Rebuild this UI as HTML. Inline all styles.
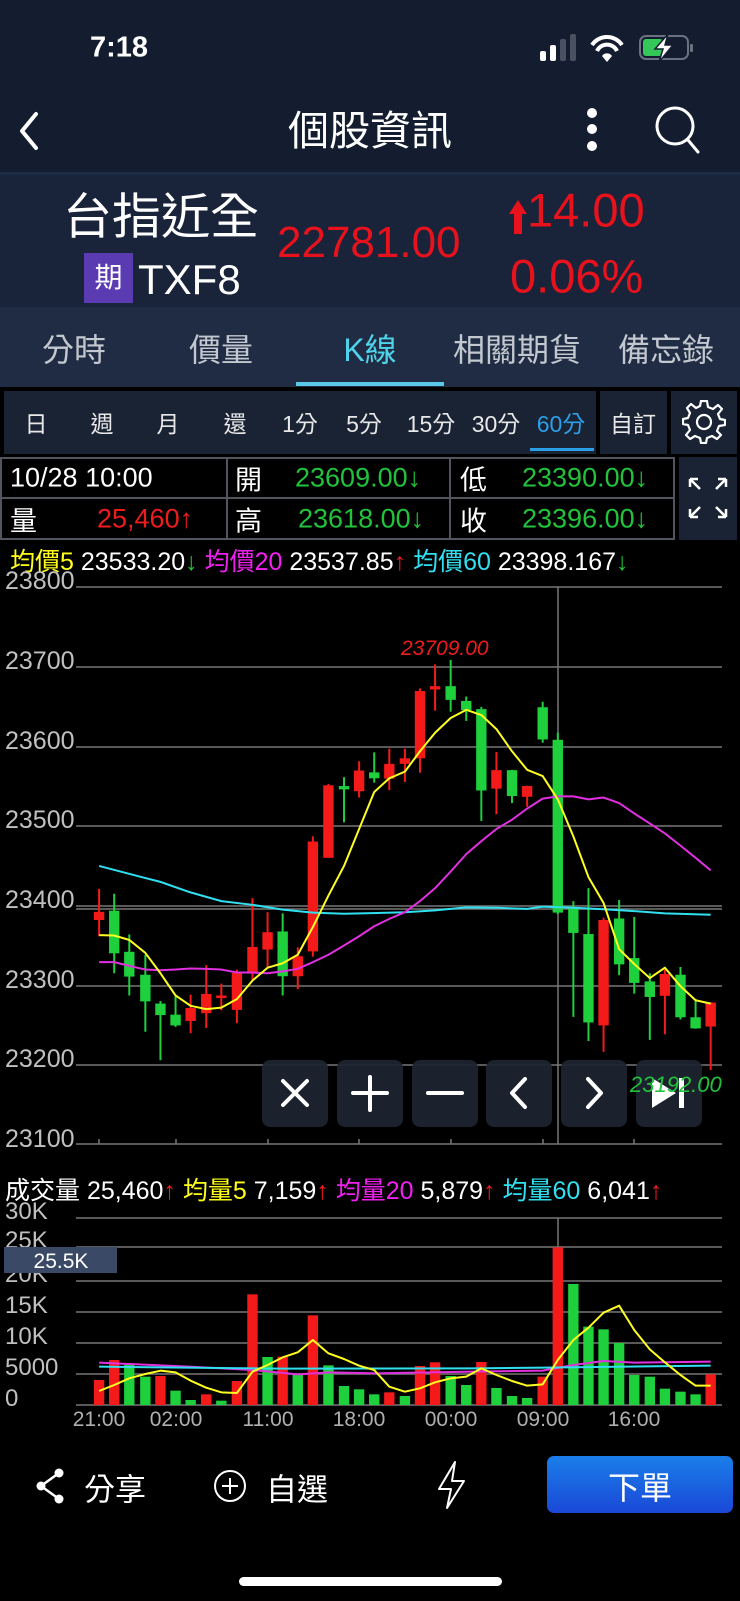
<!DOCTYPE html>
<html><head><meta charset="utf-8">
<style>
*{margin:0;padding:0;box-sizing:border-box}
body{width:740px;height:1601px;background:#000;position:relative;overflow:hidden;font-family:"Liberation Sans","Noto Sans CJK TC",sans-serif;color:#fff}
.a{position:absolute;white-space:nowrap}
.cc{transform:translate(-50%,-50%)}
.vc{transform:translateY(-50%)}
</style></head><body>
<div class="a" style="left:0;top:0;width:740px;height:173px;background:#141d2f"></div>
<div class="a" style="left:0;top:172px;width:740px;height:3px;background:#1d2c45"></div>
<div class="a" style="left:0;top:175px;width:740px;height:132px;background:#19233a"></div>
<div class="a" style="left:0;top:307px;width:740px;height:80px;background:#1f2c43"></div>

<div class="a vc" style="left:90px;top:48px;font-size:29px;font-weight:bold">7:18</div>
<svg class="a" style="left:535px;top:34px" width="160" height="30">
<rect x="5" y="17" width="6" height="10" rx="2" fill="#fff"/>
<rect x="15" y="11" width="6" height="16" rx="2" fill="#fff"/>
<rect x="25" y="5" width="6" height="22" rx="2" fill="#4a5262"/>
<rect x="35" y="0" width="6" height="27" rx="2" fill="#4a5262"/>
<path d="M57 11 A18 18 0 0 1 87 11" stroke="#fff" stroke-width="4" fill="none"/>
<path d="M62 17 A11 11 0 0 1 82 17" stroke="#fff" stroke-width="4" fill="none"/>
<path d="M67 22 L72 28 L77 22 A6 6 0 0 0 67 22Z" fill="#fff"/>
<rect x="105" y="2" width="48" height="23" rx="6" stroke="#6a7180" stroke-width="2" fill="none"/>
<rect x="108" y="5" width="20" height="17" rx="3" fill="#34c759"/>
<rect x="155" y="10" width="3" height="8" rx="1" fill="#6a7180"/>
<path d="M133 0 L120 15 L128 15 L124 28 L138 11 L130 11 Z" fill="#fff" stroke="#141d2f" stroke-width="1.5"/>
</svg>

<svg class="a" style="left:14px;top:110px" width="30" height="42"><path d="M22 4 L8 21 L22 38" stroke="#fff" stroke-width="4" fill="none" stroke-linecap="round" stroke-linejoin="round"/></svg>
<div class="a cc" style="left:370px;top:127px;font-size:41px">個股資訊</div>
<svg class="a" style="left:580px;top:104px" width="120" height="52">
<circle cx="12" cy="9" r="5" fill="#fff"/><circle cx="12" cy="25" r="5" fill="#fff"/><circle cx="12" cy="42" r="5" fill="#fff"/>
<circle cx="95" cy="22" r="18" stroke="#fff" stroke-width="3" fill="none"/>
<path d="M108 36 L118 48" stroke="#fff" stroke-width="3" stroke-linecap="round"/>
</svg>

<div class="a vc" style="left:63px;top:213px;font-size:49px">台指近全</div>
<div class="a" style="left:84px;top:253px;width:49px;height:50px;background:#5b3bb2;font-size:28px;text-align:center;line-height:50px">期</div>
<div class="a vc" style="left:138px;top:280px;font-size:42px">TXF8</div>
<div class="a vc" style="left:277px;top:243px;font-size:44px;color:#e8121c">22781.00</div>
<svg class="a" style="left:508px;top:200px" width="20" height="34"><path d="M10 0 L19 14 L14 14 L14 34 L6 34 L6 14 L1 14 Z" fill="#e8121c"/></svg>
<div class="a vc" style="left:527px;top:210px;font-size:47px;color:#e8121c">14.00</div>
<div class="a vc" style="left:510px;top:276px;font-size:47px;color:#e8121c">0.06%</div>

<div class="a cc" style="left:74px;top:348px;font-size:32px;color:#c3c7cf">分時</div>
<div class="a cc" style="left:221px;top:348px;font-size:32px;color:#c3c7cf">價量</div>
<div class="a cc" style="left:370px;top:348px;font-size:32px;color:#4fd3ea">K線</div>
<div class="a cc" style="left:517px;top:348px;font-size:32px;color:#c3c7cf">相關期貨</div>
<div class="a cc" style="left:666px;top:348px;font-size:32px;color:#c3c7cf">備忘錄</div>
<div class="a" style="left:296px;top:382px;width:148px;height:4px;background:#5bc8e8"></div>

<div class="a" style="left:4px;top:391px;width:592px;height:63px;background:#1a2333"></div>
<div class="a" style="left:600px;top:391px;width:67px;height:63px;background:#1a2333"></div>
<div class="a" style="left:671px;top:391px;width:66px;height:63px;background:#1a2333"></div>
<div style="font-size:23px;color:#e8e8e8">
<div class="a cc" style="left:36px;top:422px">日</div>
<div class="a cc" style="left:102px;top:422px">週</div>
<div class="a cc" style="left:168px;top:422px">月</div>
<div class="a cc" style="left:235px;top:422px">還</div>
<div class="a cc" style="left:300px;top:422px">1分</div>
<div class="a cc" style="left:364px;top:422px">5分</div>
<div class="a cc" style="left:431px;top:422px">15分</div>
<div class="a cc" style="left:496px;top:422px">30分</div>
<div class="a cc" style="left:561px;top:422px;color:#2d9ee8">60分</div>
<div class="a cc" style="left:633px;top:422px">自訂</div>
</div>
<div class="a" style="left:530px;top:448px;width:64px;height:3px;background:#2d9ee8"></div>
<svg class="a" style="left:682px;top:400px" width="44" height="44" viewBox="-22 -22 44 44">
<path d="M-3 -19 L3 -19 L4 -13 L9 -11 L14 -15 L18 -11 L14 -6 L16 -1 L21 0 L21 5 L15 6 L13 11 L17 15 L13 19 L8 16 L3 18 L2 23 L-3 23 L-4 18 L-9 16 L-14 19 L-18 15 L-14 10 L-16 5 L-21 4 L-21 -1 L-16 -2 L-14 -7 L-17 -12 L-13 -16 L-8 -12 L-4 -14 Z" transform="translate(0,-2)" stroke="#fff" stroke-width="2.2" fill="none" stroke-linejoin="round"/>
<circle cx="0" cy="0" r="7" stroke="#fff" stroke-width="2.2" fill="none"/>
</svg>

<div class="a" style="left:0;top:457px;width:675px;height:83px;border:2px solid #505560;background:#000"></div>
<div class="a" style="left:0;top:497px;width:675px;height:2px;background:#505560"></div>
<div class="a" style="left:226px;top:457px;width:2px;height:83px;background:#505560"></div>
<div class="a" style="left:449px;top:457px;width:2px;height:83px;background:#505560"></div>
<div style="font-size:27px">
<div class="a vc" style="left:10px;top:478px">10/28 10:00</div>
<div class="a vc" style="left:10px;top:519px">量</div>
<div class="a vc" style="left:97px;top:519px;color:#ee1c1c">25,460↑</div>
<div class="a vc" style="left:235px;top:478px">開</div>
<div class="a vc" style="left:295px;top:478px;color:#22c33c">23609.00↓</div>
<div class="a vc" style="left:235px;top:519px">高</div>
<div class="a vc" style="left:298px;top:519px;color:#22c33c">23618.00↓</div>
<div class="a vc" style="left:460px;top:478px">低</div>
<div class="a vc" style="left:522px;top:478px;color:#22c33c">23390.00↓</div>
<div class="a vc" style="left:460px;top:519px">收</div>
<div class="a vc" style="left:522px;top:519px;color:#22c33c">23396.00↓</div>
</div>
<div class="a" style="left:679px;top:457px;width:58px;height:83px;background:#1a2333"></div>
<svg class="a" style="left:686px;top:475px" width="44" height="46" stroke="#fff" stroke-width="2.5" fill="none">
<path d="M4 4 L14 14 M4 4 L4 12 M4 4 L12 4"/><path d="M40 4 L30 14 M40 4 L40 12 M40 4 L32 4"/>
<path d="M4 42 L14 32 M4 42 L4 34 M4 42 L12 42"/><path d="M40 42 L30 32 M40 42 L40 34 M40 42 L32 42"/>
</svg>

<div class="a vc" style="left:10px;top:560px;font-size:25px"><span style="color:#ffff1a">均價5</span> 23533.20<span style="color:#22c33c">↓</span> <span style="color:#f020f0">均價20</span> 23537.85<span style="color:#ee1c1c">↑</span> <span style="color:#30e0f0">均價60</span> 23398.167<span style="color:#22c33c">↓</span></div>

<svg class="a" style="left:0;top:0" width="740" height="1601">
<g stroke="#777" stroke-width="1.5">
<line x1="76" y1="587" x2="722" y2="587"/><line x1="76" y1="667" x2="722" y2="667"/><line x1="76" y1="747" x2="722" y2="747"/><line x1="76" y1="826" x2="722" y2="826"/><line x1="76" y1="906" x2="722" y2="906"/><line x1="76" y1="909" x2="722" y2="909"/><line x1="76" y1="986" x2="722" y2="986"/><line x1="76" y1="1065" x2="722" y2="1065"/><line x1="76" y1="1144" x2="722" y2="1144"/>
<line x1="558" y1="587" x2="558" y2="1144"/>
</g>
<g stroke="#777" stroke-width="1.5"><line x1="99" y1="1139" x2="99" y2="1144"/><line x1="176" y1="1139" x2="176" y2="1144"/><line x1="268" y1="1139" x2="268" y2="1144"/><line x1="359" y1="1139" x2="359" y2="1144"/><line x1="451" y1="1139" x2="451" y2="1144"/><line x1="543" y1="1139" x2="543" y2="1144"/><line x1="634" y1="1139" x2="634" y2="1144"/></g>
<g font-size="25" fill="#c0c0c0">
<text x="5" y="589">23800</text><text x="5" y="669">23700</text><text x="5" y="749">23600</text><text x="5" y="828">23500</text><text x="5" y="908">23400</text><text x="5" y="988">23300</text><text x="5" y="1067">23200</text><text x="5" y="1147">23100</text>
</g>
<g transform="translate(0,570) scale(0.4719,0.36996)">
<g stroke-width="2">
<g fill="#f41a1a" stroke="#f41a1a">
<line x1="210" y1="862" x2="210" y2="990" vector-effect="non-scaling-stroke"/><rect x="200" y="925" width="20" height="20"/>
<line x1="404" y1="1148" x2="404" y2="1252" vector-effect="non-scaling-stroke"/><rect x="394" y="1185" width="20" height="33"/>
<line x1="437" y1="1068" x2="437" y2="1238" vector-effect="non-scaling-stroke"/><rect x="427" y="1147" width="20" height="50"/>
<line x1="469" y1="1118" x2="469" y2="1190" vector-effect="non-scaling-stroke"/><rect x="459" y="1151" width="20" height="5"/>
<line x1="502" y1="1080" x2="502" y2="1225" vector-effect="non-scaling-stroke"/><rect x="492" y="1090" width="20" height="98"/>
<line x1="535" y1="887" x2="535" y2="1110" vector-effect="non-scaling-stroke"/><rect x="525" y="1020" width="20" height="70"/>
<line x1="567" y1="925" x2="567" y2="1075" vector-effect="non-scaling-stroke"/><rect x="557" y="980" width="20" height="45"/>
<line x1="631" y1="1020" x2="631" y2="1133" vector-effect="non-scaling-stroke"/><rect x="621" y="1045" width="20" height="52"/>
<line x1="663" y1="720" x2="663" y2="1045" vector-effect="non-scaling-stroke"/><rect x="653" y="735" width="20" height="295"/>
<line x1="696" y1="578" x2="696" y2="777" vector-effect="non-scaling-stroke"/><rect x="686" y="583" width="20" height="194"/>
<line x1="761" y1="517" x2="761" y2="615" vector-effect="non-scaling-stroke"/><rect x="751" y="543" width="20" height="54"/>
<line x1="825" y1="483" x2="825" y2="595" vector-effect="non-scaling-stroke"/><rect x="815" y="525" width="20" height="38"/>
<line x1="858" y1="483" x2="858" y2="573" vector-effect="non-scaling-stroke"/><rect x="848" y="510" width="20" height="13"/>
<line x1="890" y1="320" x2="890" y2="548" vector-effect="non-scaling-stroke"/><rect x="880" y="328" width="20" height="180"/>
<line x1="922" y1="255" x2="922" y2="380" vector-effect="non-scaling-stroke"/><rect x="912" y="315" width="20" height="7"/>
<line x1="1052" y1="492" x2="1052" y2="660" vector-effect="non-scaling-stroke"/><rect x="1042" y="542" width="20" height="48"/>
<line x1="1117" y1="583" x2="1117" y2="640" vector-effect="non-scaling-stroke"/><rect x="1107" y="585" width="20" height="27"/>
<line x1="1279" y1="940" x2="1279" y2="1302" vector-effect="non-scaling-stroke"/><rect x="1269" y="947" width="20" height="283"/>
<line x1="1409" y1="1080" x2="1409" y2="1255" vector-effect="non-scaling-stroke"/><rect x="1399" y="1093" width="20" height="57"/>
<line x1="1506" y1="1168" x2="1506" y2="1352" vector-effect="non-scaling-stroke"/><rect x="1496" y="1170" width="20" height="63"/>
</g>
<g fill="#1ed03c" stroke="#1ed03c">
<line x1="242" y1="875" x2="242" y2="1090" vector-effect="non-scaling-stroke"/><rect x="232" y="922" width="20" height="113"/>
<line x1="274" y1="985" x2="274" y2="1150" vector-effect="non-scaling-stroke"/><rect x="264" y="1033" width="20" height="65"/>
<line x1="308" y1="1040" x2="308" y2="1248" vector-effect="non-scaling-stroke"/><rect x="298" y="1095" width="20" height="70"/>
<line x1="340" y1="1165" x2="340" y2="1325" vector-effect="non-scaling-stroke"/><rect x="330" y="1173" width="20" height="29"/>
<line x1="372" y1="1150" x2="372" y2="1235" vector-effect="non-scaling-stroke"/><rect x="362" y="1203" width="20" height="27"/>
<line x1="599" y1="928" x2="599" y2="1150" vector-effect="non-scaling-stroke"/><rect x="589" y="978" width="20" height="119"/>
<line x1="729" y1="560" x2="729" y2="682" vector-effect="non-scaling-stroke"/><rect x="719" y="585" width="20" height="7"/>
<line x1="793" y1="493" x2="793" y2="575" vector-effect="non-scaling-stroke"/><rect x="783" y="548" width="20" height="14"/>
<line x1="955" y1="243" x2="955" y2="383" vector-effect="non-scaling-stroke"/><rect x="945" y="315" width="20" height="35"/>
<line x1="988" y1="342" x2="988" y2="408" vector-effect="non-scaling-stroke"/><rect x="978" y="355" width="20" height="23"/>
<line x1="1020" y1="370" x2="1020" y2="678" vector-effect="non-scaling-stroke"/><rect x="1010" y="377" width="20" height="218"/>
<line x1="1085" y1="540" x2="1085" y2="630" vector-effect="non-scaling-stroke"/><rect x="1075" y="542" width="20" height="68"/>
<line x1="1150" y1="356" x2="1150" y2="467" vector-effect="non-scaling-stroke"/><rect x="1140" y="372" width="20" height="85"/>
<line x1="1182" y1="440" x2="1182" y2="930" vector-effect="non-scaling-stroke"/><rect x="1172" y="460" width="20" height="465"/>
<line x1="1215" y1="895" x2="1215" y2="1208" vector-effect="non-scaling-stroke"/><rect x="1205" y="915" width="20" height="65"/>
<line x1="1247" y1="860" x2="1247" y2="1273" vector-effect="non-scaling-stroke"/><rect x="1237" y="985" width="20" height="237"/>
<line x1="1312" y1="892" x2="1312" y2="1095" vector-effect="non-scaling-stroke"/><rect x="1302" y="943" width="20" height="122"/>
<line x1="1344" y1="938" x2="1344" y2="1145" vector-effect="non-scaling-stroke"/><rect x="1334" y="1050" width="20" height="65"/>
<line x1="1377" y1="1090" x2="1377" y2="1270" vector-effect="non-scaling-stroke"/><rect x="1367" y="1113" width="20" height="40"/>
<line x1="1442" y1="1073" x2="1442" y2="1215" vector-effect="non-scaling-stroke"/><rect x="1432" y="1095" width="20" height="113"/>
<line x1="1474" y1="1160" x2="1474" y2="1240" vector-effect="non-scaling-stroke"/><rect x="1464" y="1210" width="20" height="28"/>
</g>
</g>
<g fill="none" stroke-width="2" stroke-linejoin="round">
<polyline vector-effect="non-scaling-stroke" stroke="#30e0f0" points="210,800 300,830 340,843 400,870 469,895 535,905 599,918 663,926 729,929 800,927 858,925 922,920 988,912 1052,913 1117,916 1150,910 1215,913 1279,917 1344,922 1409,928 1506,932"/>
<polyline vector-effect="non-scaling-stroke" stroke="#e030e0" points="210,1060 242,1060 274,1070 308,1080 340,1082 372,1080 404,1077 437,1078 469,1080 502,1088 535,1088 567,1090 599,1085 631,1078 663,1060 696,1040 729,1015 761,990 793,963 825,943 858,925 890,895 922,860 955,815 988,768 1020,733 1052,700 1085,675 1117,645 1150,618 1182,612 1215,612 1247,620 1279,615 1312,630 1344,658 1377,685 1409,712 1442,745 1474,778 1506,812"/>
<polyline vector-effect="non-scaling-stroke" stroke="#ffff20" points="210,987 242,988 274,1000 308,1035 340,1090 372,1150 404,1178 437,1187 469,1183 502,1160 535,1110 567,1075 599,1063 631,1040 663,965 696,880 729,800 761,700 793,600 825,563 858,545 890,490 922,440 955,400 988,378 1020,392 1052,430 1085,490 1117,540 1150,557 1182,620 1215,720 1247,830 1279,900 1312,1025 1344,1065 1377,1103 1409,1075 1442,1125 1474,1163 1506,1172"/>
</g>
</g>
<text x="401" y="655" font-size="21" font-style="italic" fill="#ee1c1c">23709.00</text>
<g fill="#1c2430" fill-opacity="0.95">
<rect x="262" y="1060" width="66" height="67" rx="8"/><rect x="337" y="1060" width="66" height="67" rx="8"/><rect x="412" y="1060" width="66" height="67" rx="8"/><rect x="486" y="1060" width="66" height="67" rx="8"/><rect x="561" y="1060" width="66" height="67" rx="8"/><rect x="636" y="1060" width="66" height="67" rx="8"/>
</g>
<g stroke="#fff" stroke-width="4" fill="none" stroke-linecap="round" stroke-linejoin="round">
<path d="M283 1081 L307 1105 M307 1081 L283 1105"/>
<path d="M370 1077 L370 1110 M353 1093 L387 1093"/>
<path d="M428 1093 L462 1093"/>
<path d="M525 1079 L512 1093 L525 1107"/>
<path d="M588 1079 L601 1093 L588 1107"/>
</g>
<path d="M652 1078 L676 1093 L652 1108 Z" fill="#fff"/>
<rect x="679" y="1078" width="5" height="30" fill="#fff"/>
<text x="630" y="1092" font-size="22" font-style="italic" fill="#22c33c">23192.00</text>

<text x="5" y="1199" font-size="25" fill="#fff">成交量 25,460<tspan fill="#ee1c1c">↑</tspan> <tspan fill="#ffff1a">均量5</tspan> 7,159<tspan fill="#ee1c1c">↑</tspan> <tspan fill="#f020f0">均量20</tspan> 5,879<tspan fill="#ee1c1c">↑</tspan> <tspan fill="#30e0f0">均量60</tspan> 6,041<tspan fill="#ee1c1c">↑</tspan></text>
<g stroke="#777" stroke-width="1.5">
<line x1="76" y1="1218" x2="722" y2="1218"/><line x1="76" y1="1247" x2="722" y2="1247"/><line x1="76" y1="1281" x2="722" y2="1281"/><line x1="76" y1="1312" x2="722" y2="1312"/><line x1="76" y1="1343" x2="722" y2="1343"/><line x1="76" y1="1374" x2="722" y2="1374"/><line x1="76" y1="1405" x2="722" y2="1405"/>
<line x1="558" y1="1218" x2="558" y2="1405"/>
</g>
<g font-size="24" fill="#c0c0c0">
<text x="5" y="1219">30K</text><text x="5" y="1248">25K</text><text x="5" y="1282">20K</text><text x="5" y="1313">15K</text><text x="5" y="1344">10K</text><text x="5" y="1375">5000</text><text x="5" y="1406">0</text>
</g>
<rect x="4" y="1247" width="113" height="26" fill="#3a4a66"/>
<text x="61" y="1268" font-size="21" fill="#fff" text-anchor="middle">25.5K</text>
<g transform="translate(0,1160) scale(0.4719,0.33333)">
<g fill="#f41a1a">
<rect x="199" y="660" width="22" height="75"/><rect x="231" y="600" width="22" height="135"/><rect x="329" y="648" width="22" height="87"/><rect x="426" y="703" width="22" height="32"/><rect x="491" y="663" width="22" height="72"/><rect x="524" y="403" width="22" height="332"/><rect x="588" y="590" width="22" height="145"/><rect x="652" y="466" width="22" height="269"/><rect x="814" y="697" width="22" height="38"/><rect x="879" y="618" width="22" height="117"/><rect x="911" y="607" width="22" height="128"/><rect x="1009" y="606" width="22" height="129"/><rect x="1139" y="650" width="22" height="85"/><rect x="1171" y="262" width="22" height="473"/><rect x="1495" y="643" width="22" height="92"/>
</g>
<g fill="#1ed03c">
<rect x="263" y="610" width="22" height="125"/><rect x="297" y="650" width="22" height="85"/><rect x="361" y="692" width="22" height="43"/><rect x="393" y="720" width="22" height="15"/><rect x="458" y="722" width="22" height="13"/><rect x="556" y="591" width="22" height="144"/><rect x="620" y="640" width="22" height="95"/><rect x="685" y="616" width="22" height="119"/><rect x="718" y="678" width="22" height="57"/><rect x="750" y="688" width="22" height="47"/><rect x="782" y="703" width="22" height="32"/><rect x="847" y="708" width="22" height="27"/><rect x="944" y="648" width="22" height="87"/><rect x="977" y="675" width="22" height="60"/><rect x="1041" y="684" width="22" height="51"/><rect x="1074" y="708" width="22" height="27"/><rect x="1106" y="714" width="22" height="21"/><rect x="1204" y="372" width="22" height="363"/><rect x="1236" y="500" width="22" height="235"/><rect x="1268" y="508" width="22" height="227"/><rect x="1301" y="549" width="22" height="186"/><rect x="1333" y="645" width="22" height="90"/><rect x="1366" y="650" width="22" height="85"/><rect x="1398" y="686" width="22" height="49"/><rect x="1431" y="695" width="22" height="40"/><rect x="1463" y="703" width="22" height="32"/>
</g>
<g fill="none" stroke-width="2" stroke-linejoin="round">
<polyline vector-effect="non-scaling-stroke" stroke="#e030e0" points="210,608 400,620 535,630 631,643 700,637 800,640 1000,635 1150,632 1215,615 1279,603 1344,608 1506,605"/>
<polyline vector-effect="non-scaling-stroke" stroke="#30e0f0" points="210,620 600,626 1000,625 1200,622 1506,617"/>
<polyline vector-effect="non-scaling-stroke" stroke="#ffff20" points="210,693 242,675 274,655 308,642 340,632 372,637 404,662 437,683 469,697 502,699 535,635 567,615 599,592 631,577 663,540 696,580 729,597 761,617 793,630 825,680 858,695 890,685 922,667 955,655 988,650 1020,625 1052,645 1085,663 1117,677 1150,673 1182,600 1215,540 1247,503 1279,458 1312,437 1344,510 1377,568 1409,607 1442,645 1474,677 1506,677"/>
</g>
</g>
<g font-size="21" fill="#b0b0b0" text-anchor="middle">
<text x="99" y="1426">21:00</text><text x="176" y="1426">02:00</text><text x="268" y="1426">11:00</text><text x="359" y="1426">18:00</text><text x="451" y="1426">00:00</text><text x="543" y="1426">09:00</text><text x="634" y="1426">16:00</text>
</g>

<g fill="#fff"><circle cx="59" cy="1473" r="4.5"/><circle cx="41" cy="1486" r="4.5"/><circle cx="59" cy="1499" r="4.5"/></g>
<path d="M59 1473 L41 1486 L59 1499" stroke="#fff" stroke-width="2.5" fill="none"/>
<circle cx="230" cy="1486" r="15" stroke="#fff" stroke-width="2" fill="none"/>
<path d="M230 1478 L230 1494 M222 1486 L238 1486" stroke="#fff" stroke-width="2"/>
<path d="M455 1462 L439 1489 L451 1489 L447 1508 L464 1481 L452 1481 Z" stroke="#fff" stroke-width="2" fill="none" stroke-linejoin="round"/>
<defs><linearGradient id="bg" x1="0" y1="0" x2="0" y2="1"><stop offset="0" stop-color="#1a7ee8"/><stop offset="1" stop-color="#1a48d8"/></linearGradient></defs>
<rect x="547" y="1456" width="186" height="57" rx="7" fill="url(#bg)"/>
<rect x="239" y="1577" width="263" height="9" rx="4.5" fill="#fff"/>
</svg>
<div class="a vc" style="left:84px;top:1487px;font-size:31px">分享</div>
<div class="a vc" style="left:266px;top:1487px;font-size:31px">自選</div>
<div class="a cc" style="left:640px;top:1486px;font-size:32px">下單</div>
</body></html>
